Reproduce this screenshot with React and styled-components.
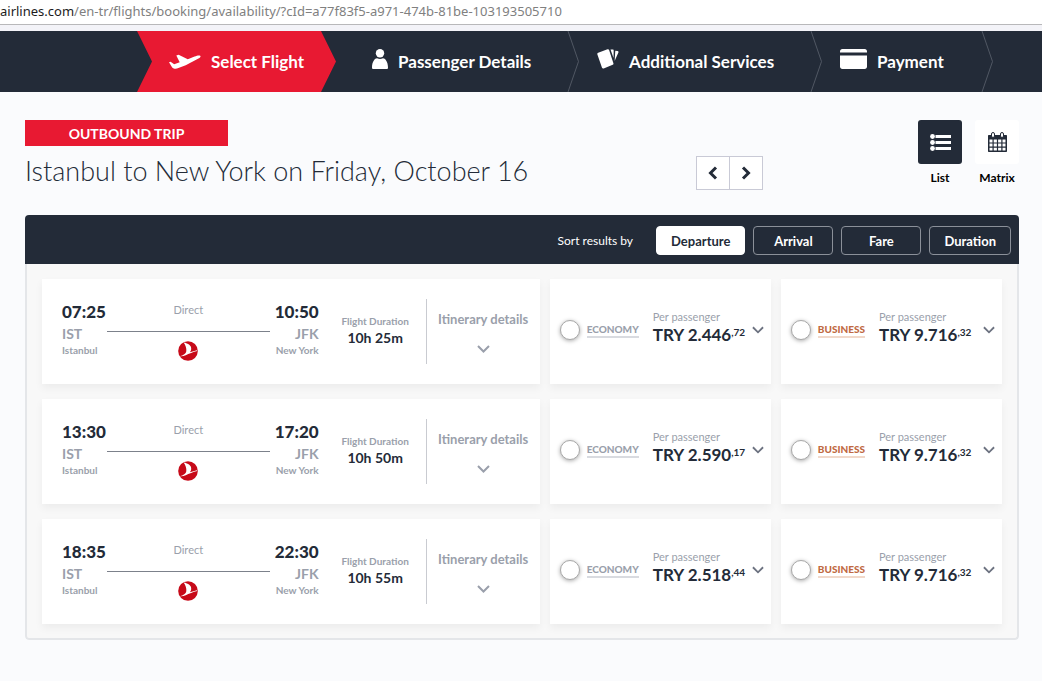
import { useState } from "react";
import styled, { createGlobalStyle, css } from "styled-components";

const NAVY = "#232b38";
const RED = "#e81932";
const GREY = "#9a9fab";

const steps = [
  { label: "Select Flight", icon: PlaneIcon, width: 199, active: true },
  { label: "Passenger Details", icon: PersonIcon, width: 225 },
  { label: "Additional Services", icon: CardsIcon, width: 243 },
  { label: "Payment", icon: PaymentIcon, width: 171 },
];

const sorts = ["Departure", "Arrival", "Fare", "Duration"];

const flights = [
  { departs: "07:25", arrives: "10:50", duration: "10h 25m", economy: ["2.446", "72"], business: ["9.716", "32"] },
  { departs: "13:30", arrives: "17:20", duration: "10h 50m", economy: ["2.590", "17"], business: ["9.716", "32"] },
  { departs: "18:35", arrives: "22:30", duration: "10h 55m", economy: ["2.518", "44"], business: ["9.716", "32"] },
];

function PlaneIcon() {
  return (
    <svg width="32" height="16" viewBox="0 0 32 16" fill="#fff">
      <path d="M0 8.2l1.6-.5 3.6 2.6 5.500-2.100L7.300 1.600 9.600.7l9.200 4.600 6.800-2.700c2.200-.9 4.600-1.400 5.600-.8 1 .8-.3 2-2.200 3L16.700 11.300 9.400 14.100c-2.500 1-4.700.7-6.200-.7z" />
    </svg>
  );
}

function PersonIcon() {
  return (
    <svg width="16" height="26" viewBox="0 0 16 26" fill="#fff">
      <circle cx="8" cy="4.200" r="4.200" />
      <path d="M0 18.500c0-6 3-9.300 5-9.300 1.800 1 4.200 1 6 0 2 0 5 3.300 5 9.300 0 1-.5 1.500-1.500 1.500h-13C.5 20 0 19.500 0 18.500z" />
    </svg>
  );
}

function CardsIcon() {
  return (
    <svg width="22" height="26" viewBox="0 0 22 26" fill="#fff">
      <path d="M1.200 3.700L10.500.3c.8-.3 1.300 0 1.600.7l4.300 13.200c.2.8 0 1.300-.7 1.600l-9 3.600c-.8.3-1.400 0-1.700-.7L.4 5.400c-.3-.8 0-1.400.8-1.700z" />
      <path d="M13.500.4h2c.9 0 1.300.5 1.200 1.300L16.500 9z" />
      <path d="M18.300 1.700l2.300.4c.8.2 1 .6.800 1.300L17.600 12z" />
    </svg>
  );
}

function PaymentIcon() {
  return (
    <svg width="27" height="26" viewBox="0 0 27 26" fill="#fff">
      <path d="M0 3.500V2.400C0 .9.900 0 2.400 0h22.200C26.100 0 27 .9 27 2.400v1.100z" />
      <path d="M0 6.500h27v11.100c0 1.500-.9 2.400-2.400 2.400H2.400C.9 20 0 19.100 0 17.600z" />
    </svg>
  );
}

function ListIcon() {
  return (
    <svg width="21" height="17" viewBox="0 0 21 17" fill="#fff">
      <circle cx="2.500" cy="2.500" r="2.400" />
      <circle cx="2.500" cy="8.500" r="2.400" />
      <circle cx="2.500" cy="14.500" r="2.400" />
      <path d="M5.500 1H21v3H5.500zM5.500 7H21v3H5.500zM5.500 13H21v3H5.500z" />
    </svg>
  );
}

function CalendarIcon() {
  return (
    <svg width="19" height="20" viewBox="0 0 19 20">
      <path fill={NAVY} d="M1 3h17c.6 0 1 .4 1 1v15c0 .6-.4 1-1 1H1c-.6 0-1-.4-1-1V4c0-.6.4-1 1-1z" />
      <path fill="#fff" d="M1.500 7.500h3v3h-3zM5.700 7.500h3.200v3H5.700zM10.100 7.500h3.200v3h-3.200zM14.500 7.500h3v3h-3zM1.500 11.600h3v3h-3zM5.700 11.600h3.200v3H5.700zM10.100 11.600h3.200v3h-3.200zM14.500 11.600h3v3h-3zM1.500 15.700h3v2.800h-3zM5.700 15.700h3.200v2.800H5.700zM10.100 15.700h3.200v2.800h-3.200zM14.500 15.700h3v2.800h-3z" />
      <rect x="3.500" y=".5" width="3" height="5" rx="1.500" fill="#fff" stroke={NAVY} />
      <rect x="12.500" y=".5" width="3" height="5" rx="1.500" fill="#fff" stroke={NAVY} />
    </svg>
  );
}

function AirlineLogo() {
  return (
    <svg width="20" height="20" viewBox="0 0 20 20" role="img" aria-label="Turkish Airlines">
      <circle cx="10" cy="10" r="9.800" fill="#c70a19" />
      <path fill="#fff" d="M5.600 1.400c4.700.8 7.900 3.200 7.600 6.300 0 1.500-.6 2.600-1.300 3.500l7-1.900.3.800c-4.200 1-8.200 2.700-11.500 4.100-2 .9-3.700 1.300-5.900 1 3.600-.9 6.200-2.500 6.500-5 .4-3.200-.8-6.300-2.700-8.800z" />
    </svg>
  );
}

function Chevron({ color = "#8c919d", width = 13 }) {
  return (
    <svg width={width} height="8" viewBox="0 0 13 8" fill="none" stroke={color} strokeWidth="2">
      <path d="M1 1l5.500 5.500L12 1" />
    </svg>
  );
}

function Arrow({ flip }) {
  return (
    <svg width="10" height="14" viewBox="0 0 10 14" fill="none" stroke={NAVY} strokeWidth="3">
      <path d={flip ? "M2 1.500L7.500 7 2 12.500" : "M8 1.500L2.500 7 8 12.500"} />
    </svg>
  );
}

function FareOption({ id, kind, price, selected, onSelect }) {
  return (
    <FareCard>
      <Radio id={id} name="fare" type="radio" checked={selected} onChange={onSelect} />
      <CabinLabel htmlFor={id} $business={kind === "BUSINESS"}>{kind}</CabinLabel>
      <Price>
        <PriceNote>Per passenger</PriceNote>
        <Amount>
          TRY {price[0]}
          <Cents>,{price[1]}</Cents>
        </Amount>
      </Price>
      <PlainButton aria-label={`${kind} fare details`}>
        <Chevron color="#6c7280" width={12} />
      </PlainButton>
    </FareCard>
  );
}

const App = () => {
  const [sort, setSort] = useState("Departure");
  const [fare, setFare] = useState(null);

  return (
    <>
      <GlobalStyle />
      <AddressBar>
        <Domain>airlines.com</Domain>/en-tr/flights/booking/availability/?cId=a77f83f5-a971-474b-81be-103193505710
      </AddressBar>
      <StepNav>
        {steps.map(({ label, icon: Icon, width, active }) => (
          <Step key={label} href="#" $width={width} $active={active}>
            <Icon />
            {label}
            {!active && (
              <StepEdge width="12" height="61" viewBox="0 0 12 61" fill="none" stroke="#515864">
                <path d="M1 0l10.500 30.500L1 61" />
              </StepEdge>
            )}
          </Step>
        ))}
      </StepNav>

      <Main>
        <TripHeader>
          <div>
            <TripTag>OUTBOUND TRIP</TripTag>
            <Title>Istanbul to New York on Friday, October 16</Title>
          </div>
          <Pager>
            <PagerButton aria-label="Previous day"><Arrow /></PagerButton>
            <PagerButton aria-label="Next day"><Arrow flip /></PagerButton>
          </Pager>
          <Views>
            <ViewButton>
              <ViewIcon $active><ListIcon /></ViewIcon>
              List
            </ViewButton>
            <ViewButton>
              <ViewIcon><CalendarIcon /></ViewIcon>
              Matrix
            </ViewButton>
          </Views>
        </TripHeader>

        <Panel>
          <SortBar>
            <SortLabel>Sort results by</SortLabel>
            {sorts.map((name) => (
              <SortButton key={name} $active={sort === name} onClick={() => setSort(name)}>
                {name}
              </SortButton>
            ))}
          </SortBar>
          <Results>
            {flights.map((flight) => (
              <FlightRow key={flight.departs}>
                <FlightCard>
                  <Airport>
                    <Time>{flight.departs}</Time>
                    <Code>IST</Code>
                    <City>Istanbul</City>
                  </Airport>
                  <Route>
                    <Stops>Direct</Stops>
                    <RouteLine />
                    <AirlineLogo />
                  </Route>
                  <Airport $end>
                    <Time>{flight.arrives}</Time>
                    <Code>JFK</Code>
                    <City>New York</City>
                  </Airport>
                  <Duration>
                    <DurationLabel>Flight Duration</DurationLabel>
                    <DurationValue>{flight.duration}</DurationValue>
                  </Duration>
                  <Itinerary>
                    Itinerary details
                    <Chevron color={GREY} />
                  </Itinerary>
                </FlightCard>
                {["ECONOMY", "BUSINESS"].map((kind) => {
                  const id = `${kind}-${flight.departs}`;
                  return (
                    <FareOption
                      key={id}
                      id={id}
                      kind={kind}
                      price={flight[kind.toLowerCase()]}
                      selected={fare === id}
                      onSelect={() => setFare(id)}
                    />
                  );
                })}
              </FlightRow>
            ))}
          </Results>
        </Panel>
      </Main>
    </>
  );
};

export default App;

const GlobalStyle = createGlobalStyle`
  * {
    box-sizing: border-box;
  }
  body {
    margin: 0;
    background: #fafbfd;
    color: ${NAVY};
    font-family: Lato, "Open Sans", sans-serif;
  }
  button {
    font-family: inherit;
    cursor: pointer;
  }
  svg {
    display: block;
    flex-shrink: 0;
  }
`;

const AddressBar = styled.div`
  height: 25px;
  border-bottom: 1px solid #b8b8ba;
  background: #fff;
  color: #808080;
  font: 13px/23px "Noto Sans", sans-serif;
  white-space: nowrap;
  overflow: hidden;
`;

const Domain = styled.span`
  color: #1c1c1c;
`;

const StepNav = styled.nav`
  display: flex;
  padding-left: 137px;
  border-top: 6px solid #f3f3f8;
  background: ${NAVY};
`;

const Step = styled.a`
  position: relative;
  display: flex;
  align-items: center;
  gap: 10px;
  width: ${({ $width }) => $width}px;
  height: 61px;
  padding-left: 18px;
  color: #fff;
  font-size: 17px;
  font-weight: 700;
  text-decoration: none;
  white-space: nowrap;
  ${({ $active }) =>
    $active &&
    css`
      margin-right: 18px;
      padding-left: 32px;
      background: ${RED};
      clip-path: polygon(0 0, calc(100% - 15px) 0, 100% 50%, calc(100% - 15px) 100%, 0 100%, 15px 50%);
    `}
`;

const StepEdge = styled.svg`
  position: absolute;
  top: 0;
  right: 0;
`;

const Main = styled.main`
  padding: 28px 23px 40px 25px;
`;

const TripHeader = styled.header`
  display: grid;
  grid-template-columns: 1fr 222px auto;
  height: 70px;
  margin-bottom: 25px;
`;

const TripTag = styled.div`
  height: 26px;
  width: 203px;
  background: ${RED};
  color: #fff;
  font-size: 14px;
  font-weight: 700;
  line-height: 28px;
  text-align: center;
`;

const Title = styled.h1`
  margin: 8px 0 0;
  font-size: 27px;
  font-weight: 300;
  line-height: 34px;
  white-space: nowrap;
`;

const Pager = styled.div`
  display: flex;
  align-self: end;
`;

const PagerButton = styled.button`
  display: flex;
  align-items: center;
  justify-content: center;
  width: 34px;
  height: 34px;
  padding: 0;
  border: 1px solid #c9cad6;
  background: #fff;
  & + & {
    margin-left: -1px;
  }
`;

const Views = styled.div`
  display: flex;
  align-items: flex-start;
  gap: 13px;
`;

const ViewButton = styled.button`
  width: 44px;
  padding: 0;
  border: 0;
  background: none;
  color: #000;
  font-size: 12px;
  font-weight: 700;
  line-height: 16px;
  text-align: center;
`;

const ViewIcon = styled.span`
  display: flex;
  align-items: center;
  justify-content: center;
  height: 44px;
  margin-bottom: 6px;
  border-radius: 3px;
  background: ${({ $active }) => ($active ? NAVY : "#fff")};
`;

const Panel = styled.section`
  border-radius: 4px;
  overflow: hidden;
`;

const SortBar = styled.div`
  display: flex;
  align-items: center;
  justify-content: flex-end;
  gap: 8px;
  height: 49px;
  padding: 2px 8px 0;
  background: ${NAVY};
`;

const SortLabel = styled.span`
  margin-right: 15px;
  color: #fff;
  font-size: 12px;
`;

const SortButton = styled.button`
  min-width: 80px;
  height: 29px;
  padding: 0 14px;
  border: 1px solid ${({ $active }) => ($active ? "#fff" : "#8b9099")};
  border-radius: 4px;
  background: ${({ $active }) => ($active ? "#fff" : "transparent")};
  color: ${({ $active }) => ($active ? NAVY : "#fff")};
  font-size: 13px;
  font-weight: 700;
`;

const Results = styled.div`
  display: grid;
  gap: 15px;
  padding: 15px 15px 14px;
  border: 2px solid #e4e6e9;
  border-top: 0;
  border-radius: 0 0 4px 4px;
  background: #f8f8f8;
`;

const FlightRow = styled.div`
  display: grid;
  grid-template-columns: minmax(0, 9fr) minmax(0, 4fr) minmax(0, 4fr);
  gap: 10px;
`;

const card = css`
  display: flex;
  min-height: 105px;
  background: #fff;
  box-shadow: 0 4px 8px rgba(0, 0, 0, 0.05);
`;

const FlightCard = styled.article`
  ${card}
  padding: 20px 0 20px 20px;
`;

const Airport = styled.div`
  width: ${({ $end }) => ($end ? 49 : 45)}px;
  padding-top: 2px;
  text-align: ${({ $end }) => ($end ? "right" : "left")};
  white-space: nowrap;
`;

const Time = styled.div`
  font-size: 17px;
  font-weight: 900;
  line-height: 22px;
`;

const Code = styled.div`
  color: ${GREY};
  font-size: 14px;
  font-weight: 700;
  line-height: 22px;
`;

const City = styled.div`
  color: ${GREY};
  font-size: 10px;
  font-weight: 700;
  line-height: 10px;
`;

const Route = styled.div`
  display: flex;
  flex: 1;
  flex-direction: column;
  align-items: center;
  padding-top: 3px;
`;

const Stops = styled.div`
  color: ${GREY};
  font-size: 11px;
  line-height: 16px;
`;

const RouteLine = styled.div`
  width: 100%;
  height: 1px;
  margin: 13px 0 9px;
  background: #7c818b;
`;

const Duration = styled.div`
  width: 108px;
  padding: 15px 0 0 6px;
  border-right: 1px solid #c9cbd1;
  text-align: center;
  white-space: nowrap;
`;

const DurationLabel = styled.div`
  color: ${GREY};
  font-size: 10px;
  font-weight: 700;
  line-height: 15px;
`;

const DurationValue = styled.div`
  font-size: 14px;
  font-weight: 700;
  line-height: 18px;
`;

const PlainButton = styled.button`
  padding: 0;
  border: 0;
  background: none;
`;

const Itinerary = styled(PlainButton)`
  display: flex;
  flex-direction: column;
  align-items: center;
  gap: 18px;
  width: 113px;
  padding-top: 12px;
  color: ${GREY};
  font-size: 13px;
  font-weight: 700;
  line-height: 16px;
  white-space: nowrap;
`;

const FareCard = styled.div`
  ${card}
  align-items: center;
  padding: 0 7px 4px 10px;
`;

const Radio = styled.input`
  appearance: none;
  flex-shrink: 0;
  width: 20px;
  height: 20px;
  margin: 0 7px 0 0;
  border: 1px solid #a9a9a9;
  border-radius: 50%;
  background: #fff;
  box-shadow: 0 1px 4px rgba(0, 0, 0, 0.35);
  cursor: pointer;
  &:checked {
    border: 6px solid ${RED};
  }
`;

const CabinLabel = styled.label`
  border-bottom: 2px solid ${({ $business }) => ($business ? "#f1d9cb" : "#d9dbe0")};
  color: ${({ $business }) => ($business ? "#bf6a43" : GREY)};
  font-size: 10px;
  font-weight: 900;
  line-height: 14px;
`;

const Price = styled.div`
  flex: 1;
  margin-left: 14px;
  padding-bottom: 4px;
  white-space: nowrap;
`;

const PriceNote = styled.div`
  color: ${GREY};
  font-size: 11px;
  line-height: 14px;
`;

const Amount = styled.div`
  font-size: 17px;
  font-weight: 700;
  line-height: 22px;
`;

const Cents = styled.sup`
  font-size: 10px;
  line-height: 0;
  vertical-align: 5px;
`;
